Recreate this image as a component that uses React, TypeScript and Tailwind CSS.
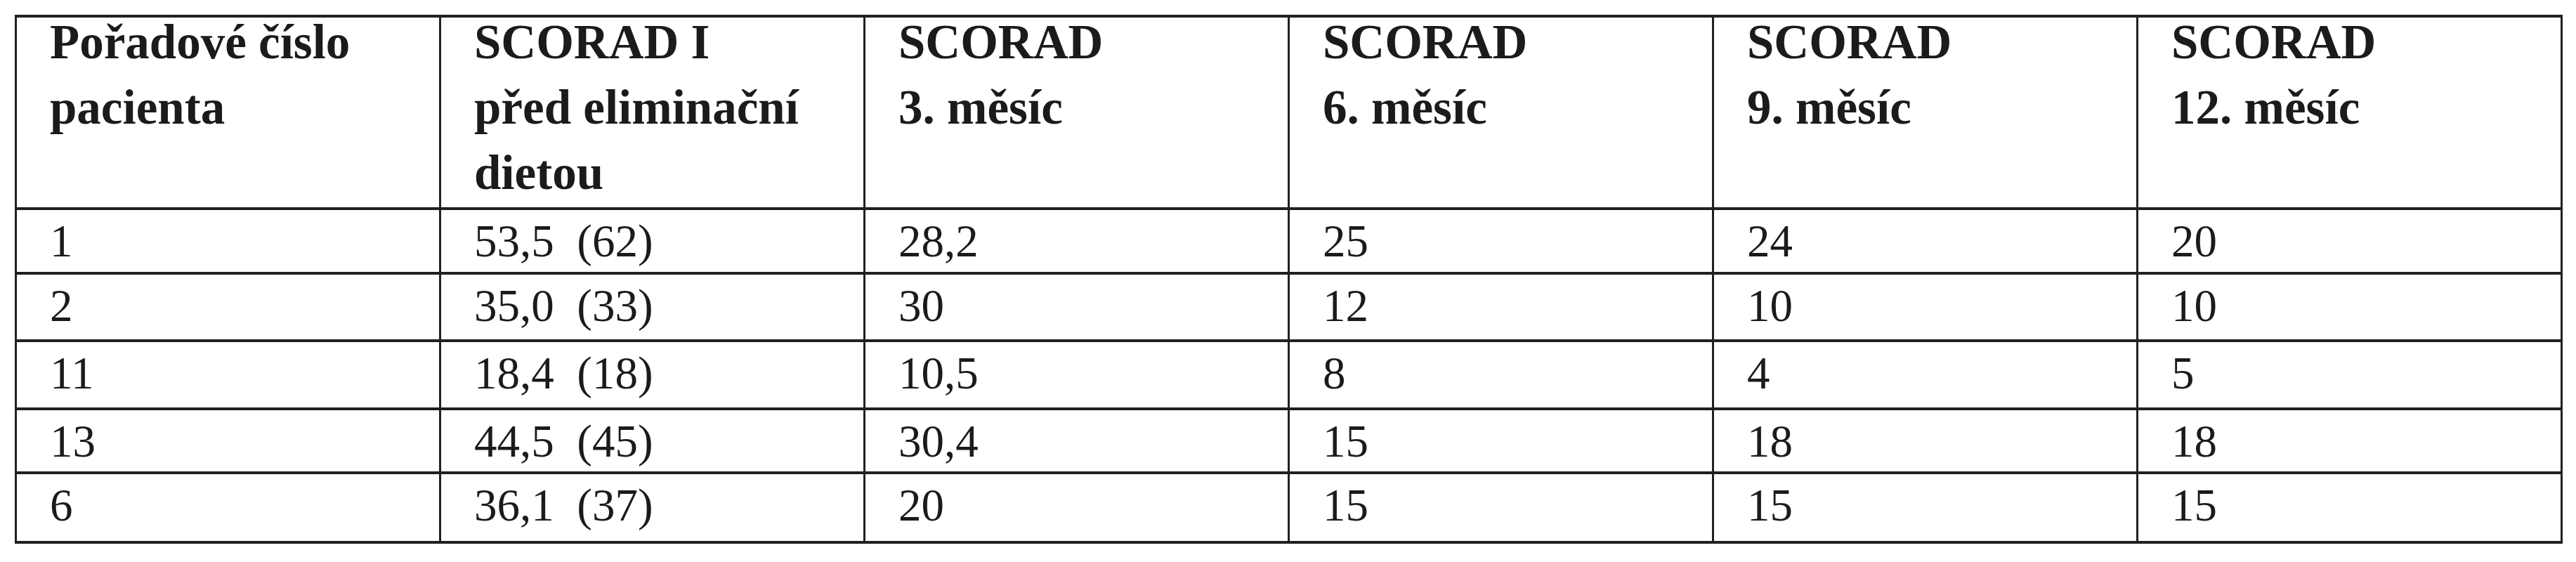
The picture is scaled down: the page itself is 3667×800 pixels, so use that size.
import { FC } from 'react';

const headers: string[][] = [
  ['Pořadové číslo', 'pacienta'],
  ['SCORAD I', 'před eliminační', 'dietou'],
  ['SCORAD', '3. měsíc'],
  ['SCORAD', '6. měsíc'],
  ['SCORAD', '9. měsíc'],
  ['SCORAD', '12. měsíc'],
];

const rows: string[][] = [
  ['1', '53,5  (62)', '28,2', '25', '24', '20'],
  ['2', '35,0  (33)', '30', '12', '10', '10'],
  ['11', '18,4  (18)', '10,5', '8', '4', '5'],
  ['13', '44,5  (45)', '30,4', '15', '18', '18'],
  ['6', '36,1  (37)', '20', '15', '15', '15'],
];

const HeaderCell: FC<{ lines: string[] }> = ({ lines }) => (
  <div className="border-r-[3px] border-b-[4px] border-[#231f20] pl-[47px]">
    <div className="flex flex-col gap-[23px] text-[69px] leading-[70px] font-bold whitespace-nowrap">
      {lines.map((l) => (
        <div key={l}>{l}</div>
      ))}
    </div>
  </div>
);

const Cell: FC<{ value: string }> = ({ value }) => (
  <div className="border-r-[3px] border-b-[4px] border-[#231f20] pl-[47px] pt-[12px] text-[65px] leading-[65px] whitespace-pre">
    {value}
  </div>
);

export default function App() {
  return (
    <div className="w-[3667px] h-[800px] bg-white overflow-hidden pt-[21px] pl-[21px] font-[family-name:'Liberation_Serif','Times_New_Roman',serif] text-[#1c1a1b]">
      <div className="w-[3627px] grid grid-cols-6 grid-rows-[274px_92px_96px_97px_91px_99px] border-l-[3px] border-t-[4px] border-[#231f20]">
        {headers.map((h, i) => (
          <HeaderCell key={i} lines={h} />
        ))}
        {rows.map((r, ri) =>
          r.map((v, ci) => <Cell key={`${ri}-${ci}`} value={v} />)
        )}
      </div>
    </div>
  );
}
